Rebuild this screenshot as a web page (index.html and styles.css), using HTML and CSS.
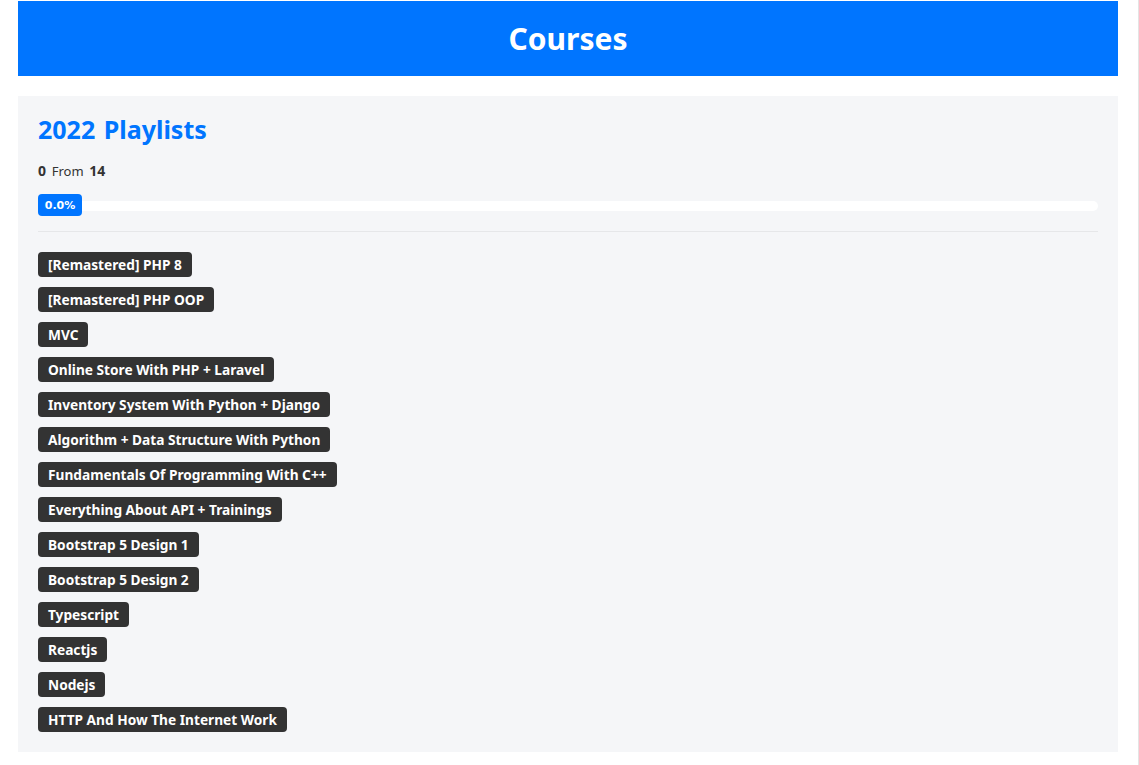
FILE: index.html
```html
<!DOCTYPE html>
<html lang="en">
<head>
<meta charset="utf-8">
<title>Courses</title>
<link rel="stylesheet" href="styles.css">
</head>
<body>
<div class="page">
  <header class="page-header">
    <h1>Courses</h1>
  </header>
  <section class="panel">
    <h2 class="panel-title">2022 Playlists</h2>
    <p class="count"><b>0</b> <span>From</span> <b>14</b></p>
    <div class="progress">
      <span class="progress-label">0.0%</span>
    </div>
    <hr class="divider">
    <ul class="tags">
      <li class="tag">[Remastered] PHP 8</li>
      <li class="tag">[Remastered] PHP OOP</li>
      <li class="tag">MVC</li>
      <li class="tag">Online Store With PHP + Laravel</li>
      <li class="tag">Inventory System With Python + Django</li>
      <li class="tag">Algorithm + Data Structure With Python</li>
      <li class="tag">Fundamentals Of Programming With C++</li>
      <li class="tag">Everything About API + Trainings</li>
      <li class="tag">Bootstrap 5 Design 1</li>
      <li class="tag">Bootstrap 5 Design 2</li>
      <li class="tag">Typescript</li>
      <li class="tag">Reactjs</li>
      <li class="tag">Nodejs</li>
      <li class="tag">HTTP And How The Internet Work</li>
    </ul>
  </section>
</div>
</body>
</html>
```

FILE: styles.css
```css
* {
  box-sizing: border-box;
}

html, body {
  margin: 0;
  padding: 0;
  background: #ffffff;
}

body {
  font-family: "Noto Sans", "Open Sans", sans-serif;
  color: #333333;
  border-right: 1px solid #e4e4e4;
  min-height: 765px;
}

.page {
  width: 1100px;
  margin: 0 0 0 18px;
  padding: 1px 0 13px;
}

.page-header {
  background: #0075ff;
  height: 75px;
  display: flex;
  align-items: center;
  justify-content: center;
}

.page-header h1 {
  margin: 0;
  color: #ffffff;
  font-size: 30px;
  font-weight: 700;
}

.panel {
  margin-top: 20px;
  background: #f5f6f8;
  padding: 17px 20px 20px;
}

.panel-title {
  margin: 0;
  color: #0075ff;
  font-size: 25px;
  font-weight: 700;
  line-height: 33px;
  word-spacing: 2px;
}

.count {
  margin: 15px 0 0;
  font-size: 14px;
  line-height: 19px;
}

.count b {
  font-weight: 700;
}

.count span {
  font-size: 13px;
  margin: 0 2px;
}

.progress {
  margin-top: 20px;
  height: 10px;
  background: #ffffff;
  border-radius: 6px;
  position: relative;
}

.progress-label {
  position: absolute;
  left: 0;
  top: -7px;
  width: 44px;
  height: 22px;
  background: #0075ff;
  color: #ffffff;
  border-radius: 4px;
  font-family: "DejaVu Sans", sans-serif;
  font-size: 11px;
  font-weight: 700;
  display: flex;
  align-items: center;
  justify-content: center;
}

.divider {
  border: none;
  border-top: 1px solid #e6e7e9;
  margin: 20px 0 0;
}

.tags {
  list-style: none;
  margin: 20px 0 0;
  padding: 0;
  display: flex;
  flex-direction: column;
  align-items: flex-start;
  gap: 10px;
}

.tag {
  background: #333333;
  color: #ffffff;
  height: 25px;
  padding: 0 10px;
  border-radius: 4px;
  font-size: 13.7px;
  font-weight: 700;
  display: flex;
  align-items: center;
}
```
